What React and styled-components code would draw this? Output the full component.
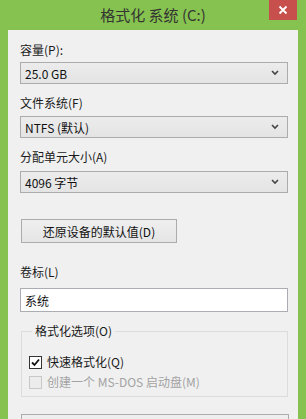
import React from "react";
import styled, { createGlobalStyle } from "styled-components";

const GlobalStyle = createGlobalStyle`
  html, body {
    margin: 0;
    padding: 0;
    background: #86c24f;
  }
  body {
    font-family: "Noto Sans CJK SC", "Liberation Sans", sans-serif;
  }
`;

const Window = styled.div`
  width: 306px;
  height: 419px;
  overflow: hidden;
  background: #86c24f;
  display: flex;
  flex-direction: column;
`;

const TitleBar = styled.div`
  position: relative;
  height: 30px;
  flex: none;
  display: flex;
  align-items: center;
  justify-content: center;
`;

const Title = styled.div`
  font-size: 15px;
  line-height: 30px;
  color: #333;
`;

const CloseButton = styled.div`
  position: absolute;
  top: 0;
  right: 9px;
  width: 28px;
  height: 20px;
  background: #c7504c;
  display: flex;
  align-items: center;
  justify-content: center;
`;

const Panel = styled.div`
  flex: 1;
  margin: 0 8px;
  background: #f0f0f0;
  padding: 12px 10px 0 12px;
  display: flex;
  flex-direction: column;
`;

const Label = styled.div`
  font-size: 12px;
  line-height: 16px;
  color: #1a1a1a;
  margin-top: ${({ top }) => top}px;
  margin-bottom: ${({ gap }) => gap}px;
`;

const Select = styled.div`
  height: 20px;
  border: 1px solid #acacac;
  background: linear-gradient(#ececec, #e4e4e4);
  display: flex;
  align-items: center;
  justify-content: space-between;
  padding: 0 8px 0 4px;
  font-size: 12px;
  color: #111;
`;

const Button = styled.div`
  width: ${({ wide }) => (wide ? "266px" : "154px")};
  height: 22px;
  flex: none;
  margin-left: 1px;
  margin-top: ${({ top }) => top}px;
  border: 1px solid #acacac;
  background: linear-gradient(#efefef, #e5e5e5);
  display: flex;
  align-items: center;
  justify-content: center;
  font-size: 12px;
  color: #111;
`;

const TextInput = styled.div`
  height: 22px;
  border: 1px solid #abadb3;
  background: #fff;
  display: flex;
  align-items: center;
  padding: 0 4px;
  font-size: 12px;
  color: #111;
`;

const GroupBox = styled.fieldset`
  box-sizing: border-box;
  margin: 11px 0 0 1px;
  padding: 15px 0 0 7px;
  height: 74px;
  flex: none;
  border: 1px solid #dcdcdc;
  display: flex;
  flex-direction: column;
  gap: 4px;
`;

const Legend = styled.legend`
  padding: 0 3px;
  margin-left: 3px;
  font-size: 12px;
  line-height: 16px;
  color: #1a1a1a;
`;

const CheckRow = styled.div`
  display: flex;
  align-items: center;
  gap: 5px;
  font-size: 12px;
  line-height: 16px;
  color: ${({ disabled }) => (disabled ? "#a3a3a3" : "#1a1a1a")};
`;

const Box = styled.span`
  width: 11px;
  height: 11px;
  border: 1px solid ${({ disabled }) => (disabled ? "#c8c8c8" : "#333")};
  background: ${({ disabled }) => (disabled ? "#ececec" : "#fff")};
  display: flex;
  align-items: center;
  justify-content: center;
`;

const Chevron = () => (
  <svg width="8" height="6" viewBox="0 0 8 6">
    <polyline points="1,1 4,4 7,1" fill="none" stroke="#444" strokeWidth="1.6" />
  </svg>
);

const Dropdown = ({ children }) => (
  <Select>
    <span>{children}</span>
    <Chevron />
  </Select>
);

const App = () => (
  <>
    <GlobalStyle />
    <Window>
      <TitleBar>
        <Title>格式化 系统 (C:)</Title>
        <CloseButton>
          <svg width="10" height="10" viewBox="0 0 10 10">
            <path d="M1.5 1.5 L8.5 8.5 M8.5 1.5 L1.5 8.5" stroke="#fff" strokeWidth="1.8" />
          </svg>
        </CloseButton>
      </TitleBar>
      <Panel>
        <Label top={0} gap={4}>容量(P):</Label>
        <Dropdown>25.0 GB</Dropdown>
        <Label top={11} gap={5}>文件系统(F)</Label>
        <Dropdown>NTFS (默认)</Dropdown>
        <Label top={11} gap={6}>分配单元大小(A)</Label>
        <Dropdown>4096 字节</Dropdown>
        <Button top={26}>还原设备的默认值(D)</Button>
        <Label top={21} gap={8}>卷标(L)</Label>
        <TextInput>系统</TextInput>
        <GroupBox>
          <Legend>格式化选项(O)</Legend>
          <CheckRow>
            <Box>
              <svg width="9" height="9" viewBox="0 0 9 9">
                <polyline points="1,4.5 3.5,7 8,1.5" fill="none" stroke="#111" strokeWidth="1.8" />
              </svg>
            </Box>
            快速格式化(Q)
          </CheckRow>
          <CheckRow disabled>
            <Box disabled />
            创建一个 MS-DOS 启动盘(M)
          </CheckRow>
        </GroupBox>
        <Button wide top={17}>开始(S)</Button>
      </Panel>
    </Window>
  </>
);

export default App;
